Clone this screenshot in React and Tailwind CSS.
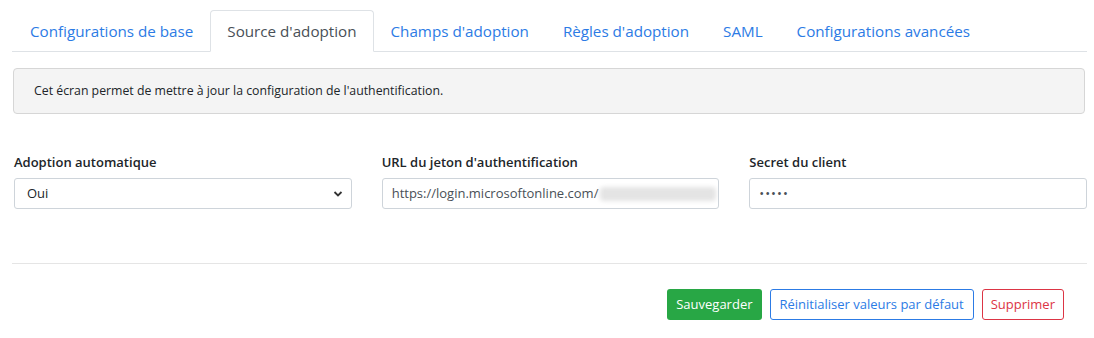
const tabs = [
  "Configurations de base",
  "Source d'adoption",
  "Champs d'adoption",
  "Règles d'adoption",
  "SAML",
  "Configurations avancées",
];

function Field({ label, children }) {
  return (
    <div className="flex flex-col">
      <label className="text-[13px] font-semibold text-[#212529] mb-[6px] leading-[20px]">{label}</label>
      {children}
    </div>
  );
}

export default function App() {
  return (
    <div className="bg-white w-[1094px] h-[338px] pt-[10px] px-[12px] font-['Open_Sans',sans-serif] text-[#212529]">
      <ul className="flex border-b border-[#dee2e6] pl-[1px] w-[1075px]">
        {tabs.map((t, i) => (
          <li
            key={t}
            className={
              i === 1
                ? "-mb-px px-4 py-2 text-[15.2px] leading-[24px] border border-[#dee2e6] border-b-white rounded-t bg-white text-[#495057]"
                : "-mb-px px-4 py-2 text-[15.2px] leading-[24px] border border-transparent text-[#2c7be5]"
            }
          >
            {t}
          </li>
        ))}
      </ul>

      <div className="mt-[16px] ml-[1px] w-[1072px] h-[46px] flex items-center px-[20px] bg-[#f4f4f4] border border-[#d6d6d6] rounded text-[12.3px]">
        Cet écran permet de mettre à jour la configuration de l'authentification.
      </div>

      <div className="grid grid-cols-3 gap-[30px] mt-[38px] pl-[2px] w-[1075px]">
        <Field label="Adoption automatique">
          <div className="h-[31px] border border-[#ced4da] rounded-[3px] flex items-center justify-between pl-[12px] pr-[8px] text-[13px]">
            <span>Oui</span>
            <svg width="10" height="8" viewBox="0 0 10 8">
              <path d="M1.5 2 L5 5.5 L8.5 2" stroke="#333" strokeWidth="1.8" fill="none" />
            </svg>
          </div>
        </Field>
        <Field label="URL du jeton d'authentification">
          <div className="h-[31px] border border-[#ced4da] rounded-[3px] flex items-center pl-[9px] text-[13px] overflow-hidden">
            <span className="text-[#495057]">https://login.microsoftonline.com/</span>
            <span className="ml-[2px] h-[14px] w-[116px] bg-[#e4e4e4] blur-[2px] rounded" />
          </div>
        </Field>
        <Field label="Secret du client">
          <div className="h-[31px] border border-[#ced4da] rounded-[3px] flex items-center pl-[9px] text-[13px] tracking-[1px] text-[#495057]">
            •••••
          </div>
        </Field>
      </div>

      <div className="mt-[54px] border-t border-[#e5e5e5] w-[1075px]" />

      <div className="flex justify-end gap-[8px] mt-[25px] w-[1052px]">
        <button className="h-[31px] px-[9px] bg-[#28a745] text-white rounded-[3px] text-[13px]">Sauvegarder</button>
        <button className="h-[31px] px-[9px] border border-[#2c7be5] text-[#2c7be5] rounded-[3px] text-[13px]">
          Réinitialiser valeurs par défaut
        </button>
        <button className="h-[31px] px-[8px] border border-[#dc3545] text-[#dc3545] rounded-[3px] text-[13px]">Supprimer</button>
      </div>
    </div>
  );
}
